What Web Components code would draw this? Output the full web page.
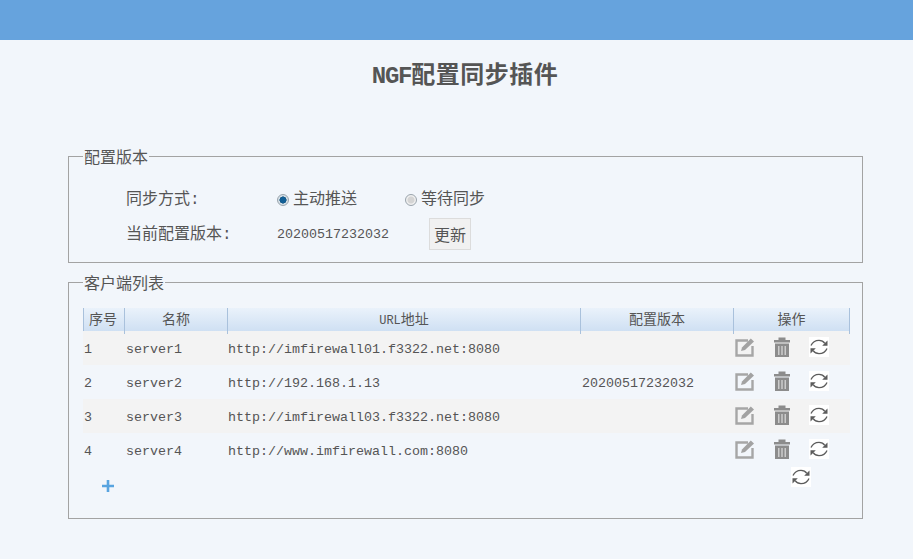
<!DOCTYPE html>
<html lang="zh">
<head>
<meta charset="utf-8">
<title>NGF配置同步插件</title>
<style>
	html, body { margin: 0; background: #f2f6fb; }
	body { font: 16px "Liberation Mono", "Noto Sans CJK SC", monospace; color: #555; }
</style>
</head>
<body>
<sync-page>
	<app-header></app-header>
	<page-title><span class="l">NGF</span>配置同步插件</page-title>
	<group-box legend="配置版本" h="107">
		<version-form></version-form>
	</group-box>
	<group-box legend="客户端列表" h="237">
		<client-table></client-table>
	</group-box>
</sync-page>
<script>
const FONT = '"Liberation Mono", "Noto Sans CJK SC", monospace';
const lat = (t) => `<span class="lat">${t}</span>`;

// iconos dibujados a mano
const ICONS = {
	edit: `<svg width="21" height="20" viewBox="0 0 21 20"><path d="M13 3.500H1.500V18.500H17.500V9" fill="none" stroke="#a6a6a6" stroke-width="2.400"/><path d="M6 14l1-3.500L15.800 1.500l3.200 3-9 8.500z" fill="#a2a2a2"/></svg>`,
	trash: `<svg width="20" height="21" viewBox="0 0 20 21"><path d="M6.500 3V.5h7V3h4.500v2.500H2V3z" fill="#8c8c8c"/><path d="M3 6.500h14v13.500H3z" fill="#8c8c8c"/><path d="M6.800 9v9M10 9v9M13.200 9v9" stroke="#dcdcdc" stroke-width="1.200"/></svg>`,
	sync: `<svg width="20" height="20" viewBox="0 0 20 20"><rect width="20" height="20" fill="#fff"/><path d="M2 8.500C3.500 5 6.500 3.300 10 3.300c2.500 0 4.500 1 5.800 3M18 11.500C16.500 15 13.500 16.700 10 16.700c-2.500 0-4.500-1-5.800-3" fill="none" stroke="#5c5c5c" stroke-width="1.300"/><path d="M18.500 3.500v5.300h-5.300zM1.500 16.500v-5.300h5.300z" fill="#5c5c5c"/></svg>`
};

class AppHeader extends HTMLElement {
	constructor() {
		super();
		this.attachShadow({ mode: "open" });
		this.shadowRoot.innerHTML = `<style>:host { display: block; height: 40px; background: #66a3dd; }</style>`;
	}
}

class PageTitle extends HTMLElement {
	constructor() {
		super();
		this.attachShadow({ mode: "open" });
		this.shadowRoot.innerHTML = `
			<style>
				:host { display: block; height: 102px; padding: 23px 0 0 17px; box-sizing: border-box; text-align: center; font: bold 24px/28px ${FONT}; letter-spacing: .5px; color: #555; }
				::slotted(.l) { letter-spacing: -1.200px; }
			</style>
			<slot></slot>`;
	}
}

class GroupBox extends HTMLElement {
	constructor() {
		super();
		this.attachShadow({ mode: "open" });
	}
	connectedCallback() {
		this.shadowRoot.innerHTML = `
			<style>
				:host { display: block; margin: 0 50px 5px 68px; }
				fieldset { margin: 0; padding: 0; box-sizing: border-box; height: ${+this.getAttribute("h") + 14}px; border: 1px solid #a3a3a3; border-radius: 0; }
				legend { margin-left: 14px; padding: 6px 1px 0; font: 16px/22px ${FONT}; color: #555; }
			</style>
			<fieldset>
				<legend>${this.getAttribute("legend")}</legend>
				<slot></slot>
			</fieldset>`;
	}
}

class RadioOption extends HTMLElement {
	constructor() {
		super();
		this.attachShadow({ mode: "open" });
	}
	connectedCallback() {
		const on = this.hasAttribute("checked");
		this.shadowRoot.innerHTML = `
			<style>
				:host { display: inline-flex; align-items: center; gap: 4px; font: 16px/20px ${FONT}; color: #555; }
				i { width: 12px; height: 12px; box-sizing: border-box; border-radius: 50%; border: 1px solid #9aa4ac;
					background: ${on ? "radial-gradient(circle, #125f96 0 2.800px, #0d4a75 3.300px, #d5e0e8 3.800px)" : "radial-gradient(circle, #d4d4d4 0 3px, #efefef 4px)"}; }
			</style>
			<i></i><slot></slot>`;
	}
}

class VersionForm extends HTMLElement {
	constructor() {
		super();
		this.attachShadow({ mode: "open" });
		this.shadowRoot.innerHTML = `
			<style>
				:host { display: grid; grid-template-columns: 151px 128px auto; grid-template-rows: 35px 35px; align-items: center; padding: 12px 0 0 57px; font: 16px/20px ${FONT}; color: #555; }
				.lat { font-size: 13.33px; }
				button { justify-self: start; margin: 0 0 2px 24px; width: 42px; height: 32px; padding: 0; background: #f1f1f1; border: 1px solid #dcdcdc; font: 16px ${FONT}; color: #555; }
			</style>
			<div>同步方式:</div>
			<radio-option checked>主动推送</radio-option>
			<radio-option>等待同步</radio-option>
			<div>当前配置版本:</div>
			<div class="lat">20200517232032</div>
			<button>更新</button>`;
	}
}

class IconBtn extends HTMLElement {
	constructor() {
		super();
		this.attachShadow({ mode: "open" });
	}
	connectedCallback() {
		this.shadowRoot.innerHTML = `<style>:host { display: inline-flex; } svg { display: block; }</style>${ICONS[this.getAttribute("name")]}`;
	}
}

class ClientTable extends HTMLElement {
	constructor() {
		super();
		this.attachShadow({ mode: "open" });
		this.clients = [
			["1", "server1", "http://imfirewall01.f3322.net:8080", ""],
			["2", "server2", "http://192.168.1.13", "20200517232032"],
			["3", "server3", "http://imfirewall03.f3322.net:8080", ""],
			["4", "server4", "http://www.imfirewall.com:8080", ""]
		];
	}
	connectedCallback() {
		const rows = this.clients.map((c) => `
			<div class="row">
				<div class="c">${c[0]}</div>
				<div class="c">${c[1]}</div>
				<div class="c">${c[2]}</div>
				<div class="c v">${c[3]}</div>
				<div class="ops">
					<icon-btn name="edit"></icon-btn>
					<icon-btn name="trash"></icon-btn>
					<icon-btn class="last" name="sync"></icon-btn>
				</div>
			</div>`).join("");
		this.shadowRoot.innerHTML = `
			<style>
				:host { display: block; margin: 12px 12px 0 14px; color: #555; font: 13.33px/34px ${FONT}; }
				.row, .head { display: grid; grid-template-columns: 42px 102px 353px 153px 117px; }
				.head { grid-template-columns: 41px 103px 353px 153px 116px; height: 23px; background: linear-gradient(#eaf2fb, #cfe0f3); border-left: 1px solid #a9c1dc; font: 14px/25px ${FONT}; }
				.head div { border-right: 1px solid #a9c1dc; text-align: center; box-sizing: border-box; }
				.head div:first-child { padding-right: 2px; }
				.head .lat { font-size: 12px; }
				.row { height: 34px; }
				.row:nth-child(even) { background: #f3f3f3; }
				.row .c { padding: 2px 0 0 1px; line-height: 34px; white-space: nowrap; overflow: hidden; }
				.row .c.v { padding-left: 2px; }
				.ops { display: flex; align-items: center; gap: 16px; padding: 0 0 2px 2px; }
				.ops .last { margin-left: 1px; }
				.foot { display: flex; align-items: flex-start; height: 38px; }
				.plus { margin: 13px 0 0 19px; width: 12px; height: 12px; }
				.foot icon-btn { margin-left: 677px; }
			</style>
			<div class="list">
				<div class="head">
					<div>序号</div><div>名称</div><div>${lat("URL")}地址</div><div>配置版本</div><div>操作</div>
				</div>
				${rows}
			</div>
			<div class="foot">
				<svg class="plus" viewBox="0 0 12 12"><path d="M6 0v12M0 6h12" stroke="#58a4e0" stroke-width="2.600"/></svg>
				<icon-btn name="sync"></icon-btn>
			</div>`;
	}
}

customElements.define("sync-page", class extends HTMLElement {
	constructor() {
		super();
		this.attachShadow({ mode: "open" });
		this.shadowRoot.innerHTML = `<style>:host { display: block; }</style><slot></slot>`;
	}
});
customElements.define("app-header", AppHeader);
customElements.define("page-title", PageTitle);
customElements.define("group-box", GroupBox);
customElements.define("radio-option", RadioOption);
customElements.define("version-form", VersionForm);
customElements.define("icon-btn", IconBtn);
customElements.define("client-table", ClientTable);
</script>
</body>
</html>
